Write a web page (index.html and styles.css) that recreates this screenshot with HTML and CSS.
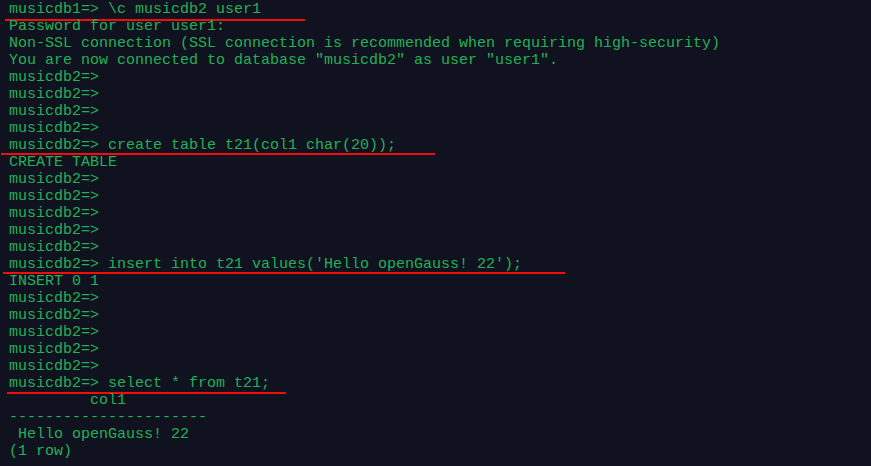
FILE: index.html
```html
<!DOCTYPE html>
<html>
<head>
<meta charset="utf-8">
<link rel="stylesheet" href="styles.css">
</head>
<body>
<div class="term">
<div class="ln">musicdb1=&gt; \c musicdb2 user1<span class="mark m1"></span></div>
<div class="ln">Password for user user1:</div>
<div class="ln">Non-SSL connection (SSL connection is recommended when requiring high-security)</div>
<div class="ln">You are now connected to database "musicdb2" as user "user1".</div>
<div class="ln">musicdb2=&gt;</div>
<div class="ln">musicdb2=&gt;</div>
<div class="ln">musicdb2=&gt;</div>
<div class="ln">musicdb2=&gt;</div>
<div class="ln">musicdb2=&gt; create table t21(col1 char(20));<span class="mark m2"></span></div>
<div class="ln">CREATE TABLE</div>
<div class="ln">musicdb2=&gt;</div>
<div class="ln">musicdb2=&gt;</div>
<div class="ln">musicdb2=&gt;</div>
<div class="ln">musicdb2=&gt;</div>
<div class="ln">musicdb2=&gt;</div>
<div class="ln">musicdb2=&gt; insert into t21 values('Hello openGauss! 22');<span class="mark m3"></span></div>
<div class="ln">INSERT 0 1</div>
<div class="ln">musicdb2=&gt;</div>
<div class="ln">musicdb2=&gt;</div>
<div class="ln">musicdb2=&gt;</div>
<div class="ln">musicdb2=&gt;</div>
<div class="ln">musicdb2=&gt;</div>
<div class="ln">musicdb2=&gt; select * from t21;<span class="mark m4"></span></div>
<div class="ln">         col1</div>
<div class="ln">----------------------</div>
<div class="ln"> Hello openGauss! 22</div>
<div class="ln">(1 row)</div>
</div>
</body>
</html>
```
FILE: styles.css
```css
html, body {
  margin: 0;
  padding: 0;
  background: #10121f;
  height: 100%;
  overflow: hidden;
}
.term {
  padding: 1px 0 0 9px;
  font-family: "Liberation Mono", "Courier New", monospace;
  font-size: 15px;
  line-height: 17px;
  color: #22b158;
}
.ln {
  position: relative;
  white-space: pre;
  height: 17px;
}
.mark {
  position: absolute;
  height: 2px;
  background: #f20c0c;
}
.m1 { top: 18px; left: -4px; width: 300px; }
.m2 { top: 16px; left: -8px; width: 434px; }
.m3 { top: 16px; left: -6px; width: 562px; }
.m4 { top: 17px; left: -2px; width: 279px; }
```
